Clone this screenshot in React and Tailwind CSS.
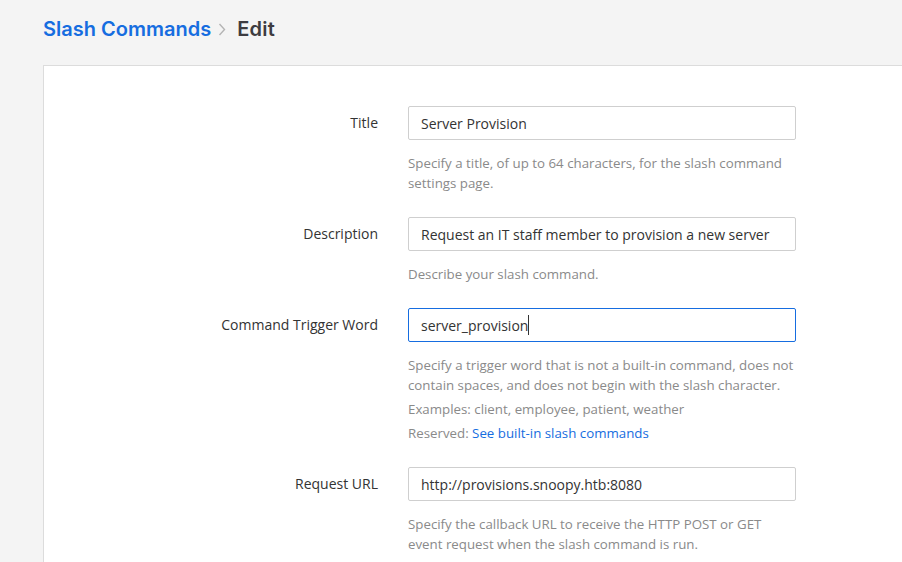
export default function App() {
  const rows = [
    {
      label: 'Title',
      value: 'Server Provision',
      help: ['Specify a title, of up to 64 characters, for the slash command settings page.'],
    },
    {
      label: 'Description',
      value: 'Request an IT staff member to provision a new server',
      help: ['Describe your slash command.'],
    },
    {
      label: 'Command Trigger Word',
      value: 'server_provision',
      focused: true,
      help: [
        'Specify a trigger word that is not a built-in command, does not contain spaces, and does not begin with the slash character.',
        'Examples: client, employee, patient, weather',
        'reserved',
      ],
    },
    {
      label: 'Request URL',
      value: 'http://provisions.snoopy.htb:8080',
      help: ['Specify the callback URL to receive the HTTP POST or GET event request when the slash command is run.'],
    },
  ];

  return (
    <div className="w-[902px] h-[562px] overflow-hidden bg-[#f4f4f4] font-['Open_Sans',sans-serif]">
      <div className="h-[65px] pl-[43px] pt-[14px] flex items-start font-['Inter',sans-serif] text-[20px] font-semibold">
        <span className="text-[#166de0]">Slash Commands</span>
        <svg width="8" height="13" viewBox="0 0 8 13" className="mt-[9px] ml-[7px] mr-[11px]">
          <path d="M1.5 1 L6.5 6.5 L1.5 12" fill="none" stroke="#b4b4b4" strokeWidth="1.4" />
        </svg>
        <span className="text-[#3d3c40] tracking-[0.3px]">Edit</span>
      </div>
      <div className="ml-[43px] h-[600px] bg-white border-l border-t border-[#dcdcdc] pt-[40px]">
        {rows.map(r => (
          <div key={r.label} className="flex mb-[24px]">
            <div className="w-[364px] pr-[30px] text-right text-[14px] text-[#333] pt-[6px]">{r.label}</div>
            <div className="w-[388px]">
              <div
                className={`h-[34px] px-[12px] flex items-center rounded-[2px] border text-[14px] text-[#333] bg-white ${
                  r.focused ? 'border-[#166de0]' : 'border-[#cfcfcf]'
                }`}
              >
                <span>{r.value}</span>
                {r.focused && <span className="w-px h-[20px] bg-[#333]" />}
              </div>
              {r.help.map((h, i) => (
                <div key={i} className={`text-[13.3px] leading-[20px] text-[#8a8a8a] ${i === 0 ? 'mt-[13px]' : 'mt-[4px]'}`}>
                  {h === 'reserved' ? (
                    <>
                      Reserved: <span className="text-[#166de0]">See built-in slash commands</span>
                    </>
                  ) : (
                    h
                  )}
                </div>
              ))}
            </div>
          </div>
        ))}
      </div>
    </div>
  );
}
